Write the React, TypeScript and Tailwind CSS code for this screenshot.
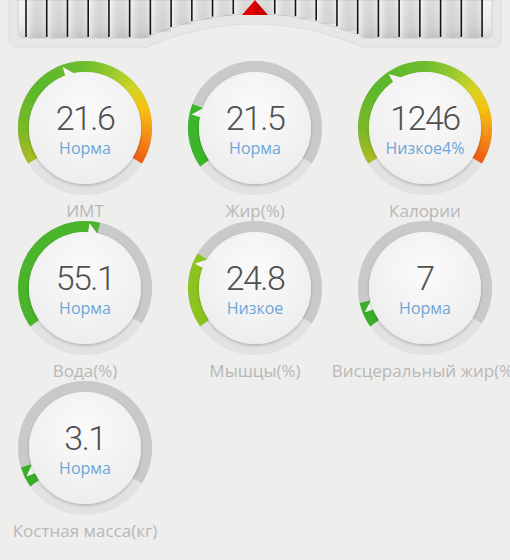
import React from 'react';

type Stop = [number, string];

const START = -122;
const SPAN = 244;
const C = 67;

const scaleStops: Stop[] = [
    [0, '#aebb1f'],
    [0.12, '#7cb928'],
    [0.3, '#5bb82b'],
    [0.5, '#6dbd2e'],
    [0.62, '#9fcb2e'],
    [0.71, '#d6d422'],
    [0.79, '#f4c412'],
    [0.88, '#f59817'],
    [1, '#ee5a12'],
];

const polar = (r: number, deg: number) => {
    const a = (deg * Math.PI) / 180;
    return [C + r * Math.sin(a), C - r * Math.cos(a)];
};

const arcPath = (r: number, a0: number, a1: number) => {
    const [x0, y0] = polar(r, a0);
    const [x1, y1] = polar(r, a1);
    const large = a1 - a0 > 180 ? 1 : 0;
    return `M${x0.toFixed(2)} ${y0.toFixed(2)} A${r} ${r} 0 ${large} 1 ${x1.toFixed(2)} ${y1.toFixed(2)}`;
};

const hex = (h: string) => [1, 3, 5].map((i) => parseInt(h.slice(i, i + 2), 16));

const colorAt = (stops: Stop[], t: number) => {
    for (let i = 0; i < stops.length - 1; i++) {
        const [t0, c0] = stops[i];
        const [t1, c1] = stops[i + 1];
        if (t >= t0 && t <= t1) {
            const k = (t - t0) / (t1 - t0);
            const a = hex(c0);
            const b = hex(c1);
            const m = a.map((v, j) => Math.round(v + (b[j] - v) * k));
            return `rgb(${m[0]},${m[1]},${m[2]})`;
        }
    }
    return stops[stops.length - 1][1];
};

type GaugeProps = {
    id: string;
    value: string;
    status: string;
    label: string;
    pointer: number; // angle of the value pointer
    color?: string; // solid fill up to the pointer
    scale?: boolean; // full gradient scale
};

const Gauge = ({ id, value, status, label, pointer, color, scale }: GaugeProps) => {
    const segs = 61;
    return (
        <div className="flex flex-col items-center">
            <div className="relative w-[134px] h-[134px]">
                <svg width="134" height="134" viewBox="0 0 134 134" className="absolute inset-0">
                    <defs>
                        <radialGradient id={`disk-${id}`} cx="50%" cy="35%" r="65%">
                            <stop offset="0%" stopColor="#fbfbfb" />
                            <stop offset="100%" stopColor="#ededed" />
                        </radialGradient>
                        <filter id={`sh-${id}`} x="-20%" y="-20%" width="140%" height="140%">
                            <feDropShadow dx="0" dy="1.5" stdDeviation="1.6" floodColor="#000" floodOpacity="0.22" />
                        </filter>
                    </defs>
                    {/* light under-ring */}
                    <circle cx={C} cy={C} r={61.5} fill="none" stroke="#e2e2e2" strokeWidth={11} />
                    {/* dark track */}
                    <path d={arcPath(61.5, START, START + SPAN)} fill="none" stroke="#c9c9c9" strokeWidth={11} />
                    {scale &&
                        Array.from({ length: segs }).map((_, i) => {
                            const a0 = START + (SPAN * i) / segs;
                            const a1 = START + (SPAN * (i + 1)) / segs + (i < segs - 1 ? 0.6 : 0);
                            return (
                                <path
                                    key={i}
                                    d={arcPath(61.5, a0, a1)}
                                    fill="none"
                                    stroke={colorAt(scaleStops, (i + 0.5) / segs)}
                                    strokeWidth={11}
                                />
                            );
                        })}
                    {color && (
                        <path d={arcPath(61.5, START - 3, pointer + 9)} fill="none" stroke={color} strokeWidth={11} />
                    )}
                    {/* pointer notch */}
                    <polygon
                        points={[polar(65, pointer), polar(54, pointer - 1), polar(54, pointer + 11)]
                            .map((p) => p.map((v) => v.toFixed(2)).join(','))
                            .join(' ')}
                        fill="#f5f5f5"
                    />
                    <circle cx={C} cy={C} r={56} fill={`url(#disk-${id})`} filter={`url(#sh-${id})`} />
                </svg>
                <div className="absolute inset-0 flex flex-col items-center pt-[40px]">
                    <div
                        className="h-[34px] text-[34px] leading-[34px] font-light tracking-[-1.5px] text-[#505050]"
                        style={{ fontFamily: 'Roboto, "Open Sans", sans-serif' }}
                    >
                        {value}
                    </div>
                    <div className="mt-[3px] h-[20px] text-[16px] leading-[20px] text-[#6ea6d8]">{status}</div>
                </div>
            </div>
            <div className="h-[26px] pt-[5px] text-[17px] leading-[22px] whitespace-nowrap text-[#b8b8b8]">{label}</div>
        </div>
    );
};

// bottom edge of the ruler: flat at the sides, lifted in the middle
const rulerY = (x: number) => {
    const d = Math.abs(x - 255);
    if (d >= 110) return 38;
    return 14 + 24 * (d / 110) * (d / 110);
};

const Ruler = () => {
    const pts: string[] = [];
    for (let x = 140; x <= 370; x += 2) pts.push(`${x},${rulerY(x).toFixed(2)}`);
    const frame: string[] = [];
    for (let x = 140; x <= 370; x += 2) frame.push(`${x},${(rulerY(x) + 10).toFixed(2)}`);
    const ticks: number[] = [];
    for (let i = 0; i < 23; i++) ticks.push(26 + i * 20.73);

    return (
        <svg width="510" height="50" viewBox="0 0 510 50" className="block">
            <defs>
                <linearGradient id="ruler-bg" x1="0" y1="0" x2="0" y2="1">
                    <stop offset="0%" stopColor="#f6f6f6" />
                    <stop offset="70%" stopColor="#e9e9e9" />
                    <stop offset="100%" stopColor="#d6d6d6" />
                </linearGradient>
                <linearGradient id="cell" x1="0" y1="0" x2="1" y2="0">
                    <stop offset="0%" stopColor="#ffffff" stopOpacity="0.7" />
                    <stop offset="100%" stopColor="#000000" stopOpacity="0.05" />
                </linearGradient>
            </defs>
            <path
                d={`M9 0 L9 40 Q9 47 16 47 L140 47 L${frame.join(' L')} L370 47 L494 47 Q501 47 501 40 L501 0 Z`}
                fill="#e7e7e7"
                stroke="#dddddd"
            />
            <path
                d={`M18 0 L18 32 Q18 38 24 38 L140 38 L${pts.join(' L')} L370 38 L486 38 Q492 38 492 32 L492 0 Z`}
                fill="url(#ruler-bg)"
                stroke="#d2d2d2"
            />
            {ticks.slice(0, -1).map((x, i) => (
                <rect key={`c${i}`} x={x} y={0} width={20.73} height={rulerY(x + 10)} fill="url(#cell)" opacity={0.6} />
            ))}
            {ticks.map((x, i) =>
                i === 11 ? null : (
                    <line key={i} x1={x} y1={0} x2={x} y2={rulerY(x) - 1} stroke="#141414" strokeWidth={1.6} />
                ),
            )}
            <polygon points="242,15 255,0 255,15" fill="#e00000" />
            <polygon points="255,0 268,15 255,15" fill="#c80000" />
        </svg>
    );
};

const App = () => {
    return (
        <div
            className="w-[510px] h-[560px] overflow-hidden bg-[#eeeeed]"
            style={{ fontFamily: '"Open Sans", "Noto Sans", sans-serif' }}
        >
            <Ruler />
            <div className="grid grid-cols-3 mt-[11px]">
                <Gauge id="a" value="21.6" status="Норма" label="ИМТ" pointer={-20} scale />
                <Gauge id="b" value="21.5" status="Норма" label="Жир(%)" pointer={-78} color="#3db52a" />
                <Gauge id="c" value="1246" status="Низкое4%" label="Калории" pointer={-34} scale />
                <Gauge id="d" value="55.1" status="Норма" label="Вода(%)" pointer={4} color="#4ab42b" />
                <Gauge id="e" value="24.8" status="Низкое" label="Мышцы(%)" pointer={-68} color="#8dc31f" />
                <Gauge id="f" value="7" status="Норма" label="Висцеральный жир(%)" pointer={-112} color="#3aae29" />
                <Gauge id="g" value="3.1" status="Норма" label="Костная масса(кг)" pointer={-116} color="#3aae29" />
            </div>
        </div>
    );
};

export default App;
